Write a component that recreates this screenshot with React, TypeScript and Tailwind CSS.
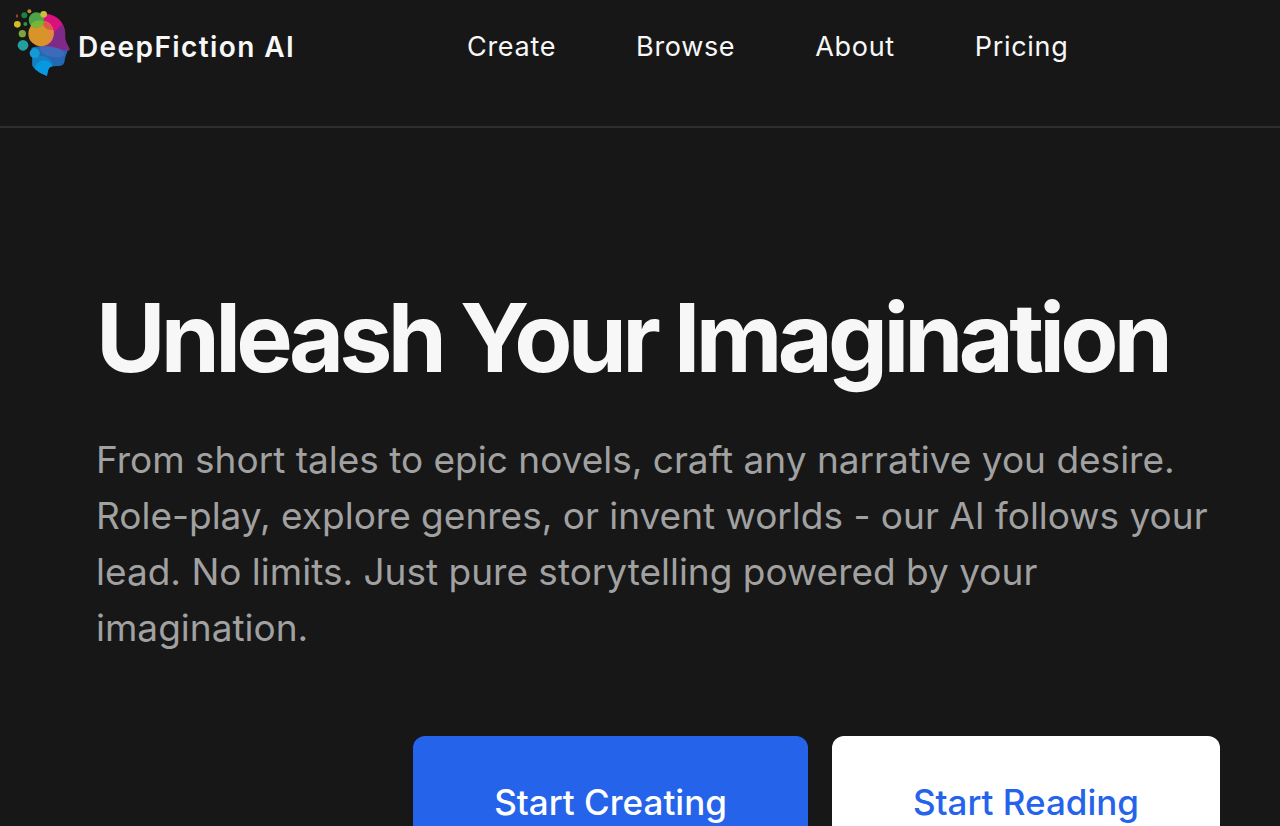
const navLinks = [
  { label: 'Create', href: '#create' },
  { label: 'Browse', href: '#browse' },
  { label: 'About', href: '#about' },
  { label: 'Pricing', href: '#pricing' },
];

const Logo = () => (
  <svg viewBox="36 18 180 210" className="h-[70px] w-[60px] shrink-0 self-start" aria-hidden="true">
    <defs>
      <clipPath id="head">
        <path d="M118 42C158 36 190 56 195 94C197 108 194 116 200 128L209 146C210 151 205 152 201 153C203 158 200 160 198 163C199 168 196 170 195 174C194 182 194 190 188 195C178 201 158 196 150 201C144 207 143 217 141 228C120 220 101 208 97 196L97 164L92 130L86 96Z" />
      </clipPath>
    </defs>
    <g clipPath="url(#head)">
      <path d="M118 30H200V100H118Z" fill="#d9117f" />
      <path d="M194 70C168 84 164 104 142 120L110 145L140 160H216V70Z" fill="#7f2a86" />
      <path d="M90 146C112 136 136 137 154 146C174 154 190 151 215 151V232H90Z" fill="#2468b4" />
      <path d="M120 140C140 136 174 142 190 152C198 168 184 174 160 171C136 168 120 158 120 140Z" fill="#3f6ab9" />
      <path d="M90 166C108 172 128 164 140 172C154 180 162 190 157 204L88 204Z" fill="#147fc2" />
      <circle cx="132" cy="210" r="29" fill="#0799df" />
    </g>
    <circle cx="123" cy="101" r="38" fill="#d8942b" />
    <path d="M132 64C148 65 161 79 161 100C161 116 151 130 138 136C151 110 148 83 132 64Z" fill="#df8b3d" />
    <path d="M128 63C142 64 154 74 159 89C147 92 134 86 130 76Z" fill="#dd5947" />
    <circle cx="109" cy="60" r="23" fill="#4da448" />
    <path d="M91 75C101 60 121 58 132 65C130 76 122 82 109 83C101 83 95 80 91 75Z" fill="#79b638" />
    <circle cx="131" cy="43" r="10" fill="#c5c13a" />
    <circle cx="88" cy="34" r="6" fill="#c68a2c" />
    <circle cx="73" cy="46" r="9" fill="#178443" />
    <ellipse cx="51" cy="48" rx="3" ry="5" fill="#bd3e25" />
    <circle cx="52" cy="73" r="10" fill="#d5bd20" />
    <circle cx="76" cy="72" r="6" fill="#2e9156" />
    <circle cx="67" cy="101" r="11" fill="#7da43b" />
    <circle cx="69" cy="136" r="16" fill="#239f9d" />
    <circle cx="104" cy="160" r="15" fill="#149ad6" />
  </svg>
);

const Header = () => (
  <header className="border-b-2 border-[#2e2e2e] px-3 pt-1.5 pb-[38px]">
    <div className="flex items-center gap-43">
      <a href="#home" className="flex h-[82px] items-center gap-1.5">
        <Logo />
        <span className="whitespace-nowrap text-[28px] leading-10 font-semibold tracking-wider">
          DeepFiction AI
        </span>
      </a>
      <nav className="flex gap-20">
        {navLinks.map((link) => (
          <a key={link.label} href={link.href} className="text-[27px] leading-10 tracking-wide">
            {link.label}
          </a>
        ))}
      </nav>
    </div>
  </header>
);

const Hero = () => (
  <main className="pt-40 pr-15 pb-24 pl-24">
    <h1 className="text-[95px] leading-25 font-bold tracking-tighter">
      Unleash Your Imagination
    </h1>
    <p className="mt-11 text-[37px] leading-14 text-[#a1a1a1]">
      From short tales to epic novels, craft any narrative you desire. Role-play, explore
      genres, or invent worlds - our AI follows your lead. No limits. Just pure storytelling
      powered by your imagination.
    </p>
    <div className="mt-20 flex justify-end gap-6">
      <button className="rounded-xl bg-[#2563eb] px-[81px] py-10 text-[35px] leading-13 font-medium text-white">
        Start Creating
      </button>
      <button className="rounded-xl bg-white px-[81px] py-10 text-[35px] leading-13 font-medium text-[#2563eb]">
        Start Reading
      </button>
    </div>
  </main>
);

export default function App() {
  return (
    <div className="min-h-screen bg-[#171717] font-['Inter',sans-serif] text-[#f7f7f7]">
      <Header />
      <Hero />
    </div>
  );
}
